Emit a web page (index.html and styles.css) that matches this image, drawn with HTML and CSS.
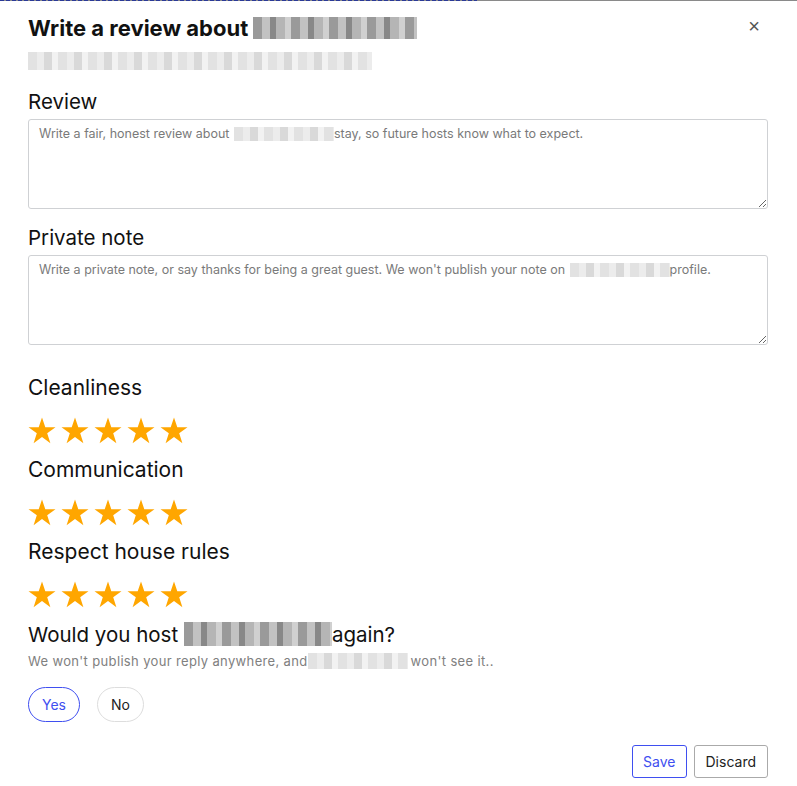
FILE: index.html
```html
<!DOCTYPE html>
<html lang="en">
<head>
    <meta charset="UTF-8">
    <meta name="viewport" content="width=device-width, initial-scale=1.0">
    <title>Write a review</title>
    <link rel="stylesheet" href="styles.css">
</head>
<body>
    <div class="topline"></div>
    <div class="modal">
        <button class="close" aria-label="Close">&times;</button>
        <h2 class="title">Write a review about <span class="blur blur-dark title-blur"></span></h2>
        <div class="blur blur-light subtitle-blur"></div>

        <div class="field first">
            <label for="review">Review</label>
            <div class="box">
                <textarea id="review"></textarea>
                <div class="ph">Write a fair, honest review about <span class="blur blur-light ph-blur"></span>stay, so future hosts know what to expect.</div>
            </div>
        </div>

        <div class="field">
            <label for="note">Private note</label>
            <div class="box">
                <textarea id="note"></textarea>
                <div class="ph">Write a private note, or say thanks for being a great guest. We won't publish your note on <span class="blur blur-light ph-blur"></span>profile.</div>
            </div>
        </div>

        <div class="rating first">
            <div class="rating-label">Cleanliness</div>
            <div class="stars"></div>
        </div>
        <div class="rating">
            <div class="rating-label">Communication</div>
            <div class="stars"></div>
        </div>
        <div class="rating">
            <div class="rating-label">Respect house rules</div>
            <div class="stars"></div>
        </div>

        <div class="host">
            <div class="host-title">Would you host <span class="blur blur-dark host-blur"></span>again?</div>
            <div class="host-sub">We won't publish your reply anywhere, and<span class="blur blur-light sub-blur"></span>won't see it..</div>
            <div class="choices">
                <button class="pill active">Yes</button>
                <button class="pill">No</button>
            </div>
        </div>

        <div class="actions">
            <button class="btn btn-save">Save</button>
            <button class="btn">Discard</button>
        </div>
    </div>
    <script>
        // bintang rating
        const star = '<svg width="28" height="27" viewBox="0 0 28 27"><path d="M14 0.5l3.3 9.8h10.2l-8.3 6 3.2 9.9-8.4-6.1-8.4 6.1 3.2-9.9-8.3-6h10.2z" fill="#ffa600"/></svg>';
        document.querySelectorAll('.stars').forEach(function (el) {
            el.innerHTML = star.repeat(5);
        });
        document.querySelectorAll('.box textarea').forEach(function (ta) {
            ta.addEventListener('input', function () {
                ta.nextElementSibling.style.display = ta.value ? 'none' : '';
            });
        });
    </script>
</body>
</html>
```
FILE: styles.css
```css
body {
    margin: 0;
    font-family: Inter, "Noto Sans", sans-serif;
    color: #111;
    background: #fff;
}
.topline {
    height: 1px;
    background: #8a8a8a;
}
.topline::before {
    content: "";
    display: block;
    width: 477px;
    height: 1px;
    background: repeating-linear-gradient(90deg, #2b3a98 0 4px, #8a8a8a 4px 6px);
}
.modal {
    position: relative;
    padding: 12px 29px 0 28px;
}
.close {
    position: absolute;
    top: 15px;
    right: 37px;
    border: none;
    background: none;
    font-size: 20px;
    color: #555;
    padding: 0;
    line-height: 20px;
    cursor: pointer;
}
.title {
    margin: 0;
    font-size: 22px;
    font-weight: 700;
    line-height: 30px;
}
.blur {
    display: inline-block;
    vertical-align: middle;
}
.blur-dark {
    background: repeating-linear-gradient(90deg, #9a9a9a 0 9px, #c2c2c2 9px 17px, #888 17px 23px, #b5b5b5 23px 32px, #d0d0d0 32px 38px);
}
.blur-light {
    background: repeating-linear-gradient(90deg, #e2e2e2 0 9px, #ececec 9px 16px, #d9d9d9 16px 24px, #f2f2f2 24px 30px);
}
.title-blur {
    width: 164px;
    height: 22px;
    margin-top: -4px;
}
.subtitle-blur {
    display: block;
    width: 344px;
    height: 18px;
    margin-top: 9px;
}
.field {
    margin-top: 17px;
}
.field.first {
    margin-top: 20px;
}
label {
    display: block;
    font-size: 20.5px;
    line-height: 24px;
    margin-bottom: 5px;
}
.box {
    position: relative;
}
textarea {
    display: block;
    box-sizing: border-box;
    width: 100%;
    height: 90px;
    border: 1px solid #cfd1d4;
    border-radius: 3px;
    padding: 6px 10px;
    font-family: Inter, "Noto Sans", sans-serif;
    font-size: 12.5px;
    line-height: 18px;
    color: #333;
    resize: vertical;
}
.ph {
    position: absolute;
    top: 6px;
    left: 11px;
    right: 11px;
    font-size: 12.5px;
    line-height: 18px;
    color: #7a7a7a;
    pointer-events: none;
}
.ph-blur {
    width: 100px;
    height: 14px;
    margin: -2px 0 0 1px;
}
.rating {
    margin-top: 13px;
}
.rating.first {
    margin-top: 31px;
}
.rating-label {
    font-size: 21px;
    line-height: 24px;
    margin-bottom: 15px;
}
.stars {
    display: flex;
    gap: 5px;
    height: 30px;
    align-items: center;
}
.stars svg {
    width: 28px;
    height: 27px;
}
.host {
    margin-top: 13px;
}
.host-title {
    font-size: 20.5px;
    line-height: 26px;
}
.host-blur {
    width: 148px;
    height: 24px;
    margin-top: -4px;
}
.host-sub {
    margin-top: 4px;
    font-size: 13px;
    line-height: 18px;
    letter-spacing: 0.35px;
    color: #808080;
}
.sub-blur {
    width: 100px;
    height: 16px;
    margin: -3px 3px 0 0;
}
.choices {
    display: flex;
    gap: 17px;
    margin-top: 17px;
}
.pill {
    height: 35px;
    padding: 0 13px;
    border: 1px solid #ddd;
    border-radius: 18px;
    background: #fff;
    font-family: Inter, "Noto Sans", sans-serif;
    font-size: 14px;
    color: #222;
    cursor: pointer;
}
.pill.active {
    border-color: #3f4ff0;
    color: #3f4ff0;
}
.actions {
    display: flex;
    justify-content: flex-end;
    gap: 7px;
    margin-top: 23px;
}
.btn {
    height: 33px;
    padding: 0 11px;
    border: 1px solid #aaa;
    border-radius: 3px;
    background: #fff;
    font-family: Inter, "Noto Sans", sans-serif;
    font-size: 14px;
    color: #222;
    cursor: pointer;
}
.btn-save {
    padding: 0 10px;
    border-color: #3f4ff0;
    color: #3f4ff0;
}
```
